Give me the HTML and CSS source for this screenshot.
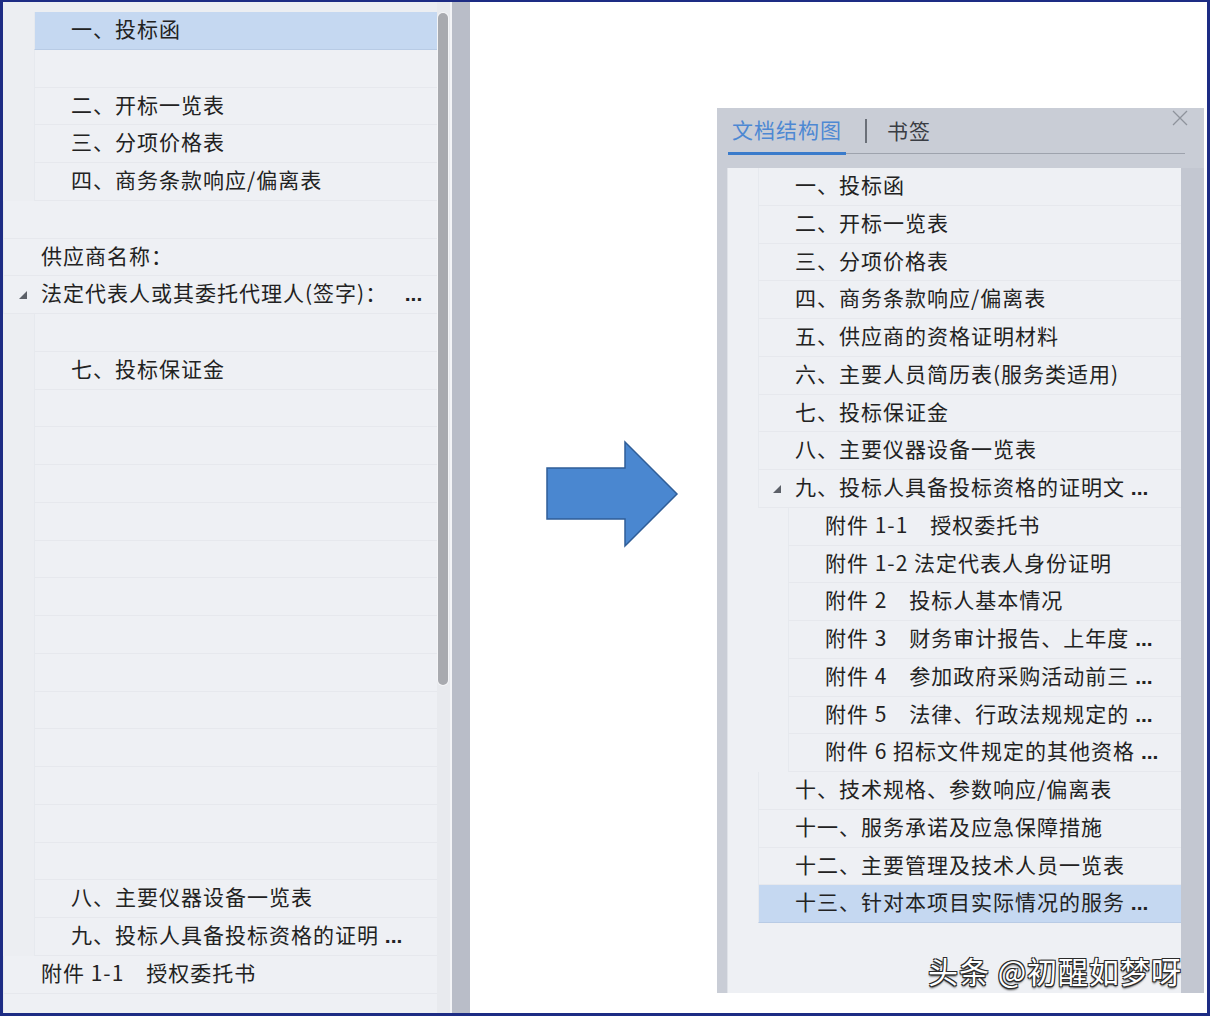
FILE: index.html
```html
<!DOCTYPE html>
<html lang="zh-CN">

<head>
  <meta charset="UTF-8">
  <meta name="viewport" content="width=device-width, initial-scale=1.0">
  <title>文档结构图</title>
  <link rel="stylesheet" href="styles.css">
</head>

<body>
  <div class="frame">

    <!-- before: the outline as the document showed it -->
    <section class="doc-pane">
      <ul class="tree">
        <li class="row l1 selected">一、投标函</li>
        <li class="row l1"></li>
        <li class="row l1">二、开标一览表</li>
        <li class="row l1">三、分项价格表</li>
        <li class="row l1">四、商务条款响应/偏离表</li>
        <li class="row"></li>
        <li class="row">供应商名称：</li>
        <li class="row"><span class="caret"></span>法定代表人或其委托代理人(签字)：<span class="more">&nbsp;&nbsp;&nbsp;...</span></li>
        <li class="row l1"></li>
        <li class="row l1">七、投标保证金</li>
        <li class="row l1"></li>
        <li class="row l1"></li>
        <li class="row l1"></li>
        <li class="row l1"></li>
        <li class="row l1"></li>
        <li class="row l1"></li>
        <li class="row l1"></li>
        <li class="row l1"></li>
        <li class="row l1"></li>
        <li class="row l1"></li>
        <li class="row l1"></li>
        <li class="row l1"></li>
        <li class="row l1"></li>
        <li class="row l1">八、主要仪器设备一览表</li>
        <li class="row l1">九、投标人具备投标资格的证明<span class="more"> ...</span></li>
        <li class="row">附件 1-1　授权委托书</li>
        <li class="row"></li>
      </ul>
      <div class="vscroll"><div class="thumb"></div></div>
      <div class="pane-edge"></div>
    </section>

    <main class="stage">
      <svg class="arrow" width="134" height="108" viewBox="0 0 134 108">
        <polygon points="2,28 80,28 80,2 132,54 80,106 80,79 2,79" fill="#4a87d0" stroke="#2f5e98" stroke-width="1.5" stroke-linejoin="miter"/>
      </svg>

      <!-- after: the navigation panel -->
      <section class="outline">
        <header class="outline-head">
          <div class="tabs">
            <span class="tab active">文档结构图</span>
            <span class="tab-sep"></span>
            <span class="tab">书签</span>
          </div>
        </header>
        <svg class="close" width="16" height="16" viewBox="0 0 16 16">
          <path d="M1 1 L15 15 M15 1 L1 15" stroke="#8e939c" stroke-width="1.3" fill="none"/>
        </svg>

        <div class="outline-body">
          <ul class="tree">
            <li class="row l1">一、投标函</li>
            <li class="row l1">二、开标一览表</li>
            <li class="row l1">三、分项价格表</li>
            <li class="row l1">四、商务条款响应/偏离表</li>
            <li class="row l1">五、供应商的资格证明材料</li>
            <li class="row l1">六、主要人员简历表(服务类适用)</li>
            <li class="row l1">七、投标保证金</li>
            <li class="row l1">八、主要仪器设备一览表</li>
            <li class="row l1"><span class="caret"></span>九、投标人具备投标资格的证明文<span class="more"> ...</span></li>
            <li class="row l2">附件 1-1　授权委托书</li>
            <li class="row l2">附件 1-2 法定代表人身份证明</li>
            <li class="row l2">附件 2　投标人基本情况</li>
            <li class="row l2">附件 3　财务审计报告、上年度<span class="more"> ...</span></li>
            <li class="row l2">附件 4　参加政府采购活动前三<span class="more"> ...</span></li>
            <li class="row l2">附件 5　法律、行政法规规定的<span class="more"> ...</span></li>
            <li class="row l2">附件 6 招标文件规定的其他资格<span class="more"> ...</span></li>
            <li class="row l1">十、技术规格、参数响应/偏离表</li>
            <li class="row l1">十一、服务承诺及应急保障措施</li>
            <li class="row l1">十二、主要管理及技术人员一览表</li>
            <li class="row l1 selected">十三、针对本项目实际情况的服务<span class="more"> ...</span></li>
          </ul>
          <div class="outline-edge"></div>
        </div>

        <p class="watermark">头条 @初醒如梦呀</p>
      </section>
    </main>

  </div>
</body>

</html>
```

FILE: styles.css
```css
* {
  box-sizing: border-box;
}

body {
  margin: 0;
  background: #ffffff;
  font-family: "Noto Sans CJK SC", "Microsoft YaHei", sans-serif;
  color: #222;
}

.frame {
  display: flex;
  width: 1210px;
  height: 1016px;
  border: 3px solid #1d2c84;
  border-top-width: 2px;
  overflow: hidden;
}

/* ---------- tree rows (shared) ---------- */

.tree {
  list-style: none;
  margin: 0;
  padding: 0;
}

.row {
  height: 37.75px;
  line-height: 33px;
  padding-left: 37px;
  font-size: 21px;
  letter-spacing: 1px;
  white-space: nowrap;
  overflow: hidden;
  border-bottom: 1px solid #e6e8ed;
  border-left: 1px solid #e6e9ee;
  background: #eef0f4;
}

.row.selected {
  background: #c5d8f1;
  border-bottom-color: #b8cbe5;
}

.caret {
  display: inline-block;
  width: 0;
  height: 0;
  margin-left: -22px;
  margin-right: 14px;
  border-left: 8px solid transparent;
  border-bottom: 8px solid #5c6068;
  vertical-align: 2px;
}

.more {
  font-family: "Liberation Sans", sans-serif;
  font-weight: bold;
  letter-spacing: 0;
}

/* ---------- left: document pane ---------- */

.doc-pane {
  display: flex;
  width: 467px;
  flex-shrink: 0;
  background: #eceef2;
}

.doc-pane .tree {
  width: 434px;
  padding-top: 10px;
}

.doc-pane .l1 {
  margin-left: 31px;
  padding-left: 36px;
}

.vscroll {
  width: 15px;
  background: #e8eaee;
  border-right: 2px solid #f3f4f7;
}

.thumb {
  width: 10px;
  height: 672px;
  margin: 11px 0 0 1px;
  border-radius: 5px;
  background: #a8aaaf;
  box-shadow: 0 0 0 1px #f4f5f7;
}

.pane-edge {
  flex: 1;
  background: #b9bdc8;
}

/* ---------- right: stage with arrow and panel ---------- */

.stage {
  flex: 1;
  display: flex;
  align-items: flex-start;
  background: #ffffff;
}

.arrow {
  display: block;
  margin: 438px 0 0 75px;
  flex-shrink: 0;
}

.outline {
  position: relative;
  width: 487px;
  height: 885px;
  margin: 106px 0 0 38px;
  padding-left: 10px;
  background: #c9cdd6;
}

.outline-head {
  height: 60px;
  padding-top: 7px;
}

.tabs {
  display: flex;
  align-items: flex-end;
  width: 457px;
  margin-left: 1px;
  border-bottom: 1px solid #9ea3ad;
}

.tab {
  padding: 0 4px 9px;
  line-height: 28px;
  font-size: 21px;
  letter-spacing: 1px;
  color: #3a3d44;
}

.tab.active {
  color: #4d88d3;
  border-bottom: 3px solid #3a7bcb;
  margin-bottom: -2px;
}

.tab-sep {
  width: 2px;
  height: 24px;
  margin: 0 16px 10px 19px;
  background: #6b7079;
}

.close {
  position: absolute;
  top: 2px;
  right: 16px;
}

.outline-body {
  display: flex;
  height: 825px;
}

.outline-body .tree {
  width: 454px;
  background: #eef0f4;
  border-left: 1px solid #dfe2e8;
}

.outline-body .l1 {
  margin-left: 30px;
  padding-left: 36px;
}

.outline-body .l2 {
  margin-left: 60px;
  padding-left: 36px;
}

.outline-edge {
  flex: 1;
  background: #c3c7d1;
}

.watermark {
  position: absolute;
  left: 211px;
  top: 840px;
  margin: 0;
  font-size: 30px;
  letter-spacing: 1px;
  color: #ffffff;
  text-shadow: 1px 1px 0 #2a2a2a, -1px -1px 0 #2a2a2a, 1px -1px 0 #2a2a2a, -1px 1px 0 #2a2a2a, 0 2px 2px #333333;
}
```
